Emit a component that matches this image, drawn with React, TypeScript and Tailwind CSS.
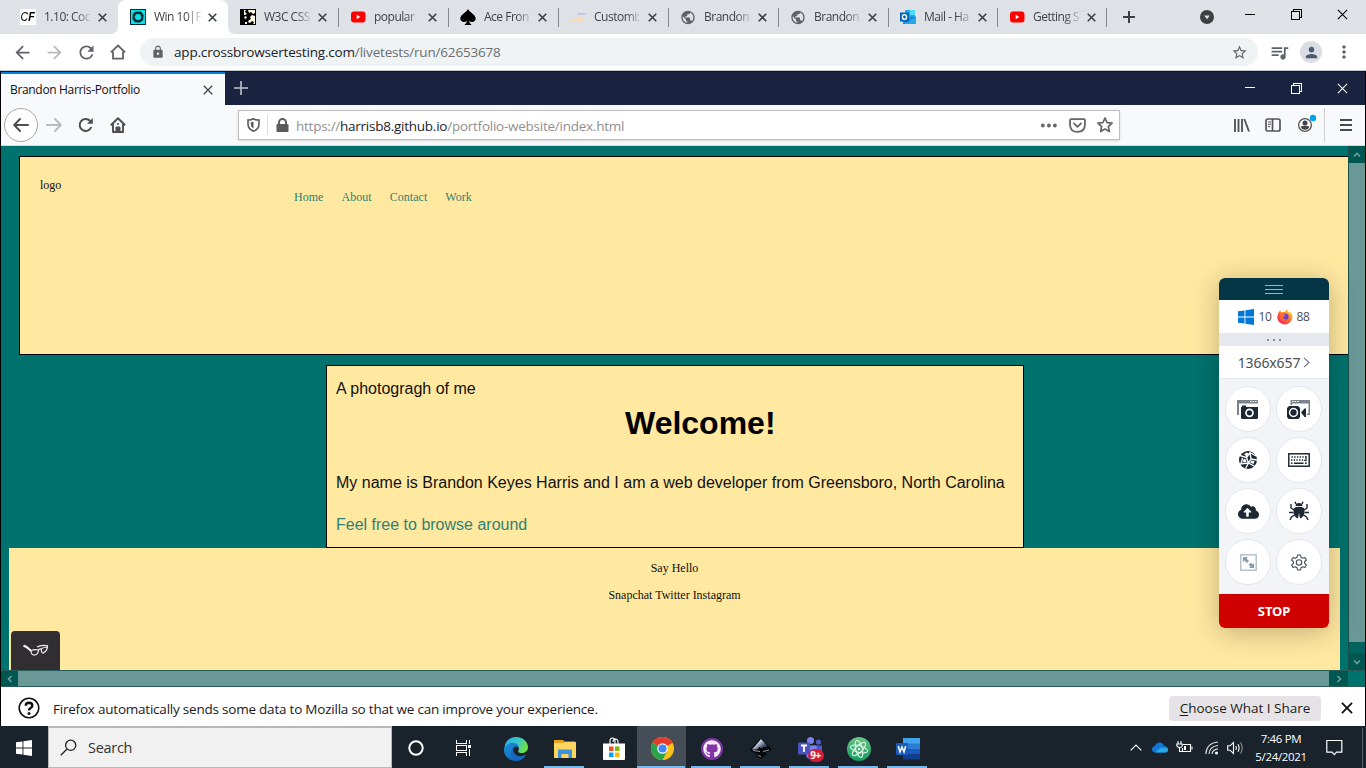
import React from "react";
import { MdArrowBack, MdArrowForward, MdRefresh, MdLock, MdStarBorder, MdQueueMusic, MdPerson, MdPublic, MdMoreVert } from "react-icons/md";
import { FaCloudUploadAlt, FaGithub } from "react-icons/fa";

const CloseX = ({ size = 9, w = 1.8, color = "#3c4043" }: { size?: number; w?: number; color?: string }) => (
  <svg width={size} height={size} viewBox="0 0 10 10" className="shrink-0">
    <path d="M.8 .8L9.2 9.2M9.2 .8L.8 9.2" stroke={color} strokeWidth={w} fill="none" />
  </svg>
);

const Restore = ({ color }: { color: string }) => (
  <svg width="11" height="11" viewBox="0 0 11 11" shapeRendering="crispEdges">
    <path d="M.5 2.5H8.5V10.5H.5ZM2.5 2.5V.5H10.5V8.5H8.5" stroke={color} fill="none" />
  </svg>
);

const YouTube = () => (
  <svg width="16" height="16" viewBox="0 0 16 16">
    <rect x="1" y="2.5" width="14.5" height="11" rx="3" fill="#f00" />
    <path d="M6.7 5.8V10.2L10.3 8Z" fill="#fff" />
  </svg>
);

const CfIcon = () => (
  <span className="flex h-4 w-4 items-center justify-center bg-white font-['Liberation_Sans_Narrow','Liberation_Sans',sans-serif] text-[13px] leading-4 text-black italic">
    <span className="flex origin-center scale-x-[0.82]">C<b>F</b></span>
  </span>
);

const CrossIcon = () => (
  <svg width="16" height="16" viewBox="0 0 16 16">
    <rect width="16" height="16" fill="#0b2a33" />
    <rect x="1" y="1" width="14" height="14" fill="#06e2ea" />
    <path d="M5 2.8L11 2.6L13.6 6L13.2 11L10 13.6L5 13.2L2.4 10L2.8 5Z" fill="#0b2a33" />
    <path d="M6 5.2L10.2 5L11.3 8.5L9.6 11L6 10.8L4.6 8Z" fill="#06e2ea" />
  </svg>
);

const PuzzleIcon = () => (
  <svg width="16" height="16" viewBox="0 0 16 16">
    <rect width="16" height="16" fill="#000" />
    <path d="M1 1H6L5 3L7 5L5 6H1ZM8 1H15V4L13 5L11 3L9 4ZM12 6L15 7V15H13L14 13L12 12L10 14L8 13L9 11L11 10L10 8Z" fill="#fff8e2" />
    <path d="M1 1H4V6H1Z" fill="#000" />
    <path d="M4 8L6 7L7 9L5 10ZM5 13H7V15H5Z" fill="#fff8e2" />
  </svg>
);

const Spade = () => (
  <svg width="16" height="16" viewBox="0 0 16 16">
    <path d="M8 0C9 3 15.7 5.5 15.7 9.6C15.7 13 11.5 14 9.3 12L9.8 14.5L11.2 15V16H4.8V15L6.2 14.5L6.7 12C4.5 14 .3 13 .3 9.6C.3 5.5 7 3 8 0Z" fill="#000" />
  </svg>
);

const CustomIcon = () => (
  <svg width="16" height="16" viewBox="0 0 16 16">
    <path d="M8 4H16V5.6H7Z" fill="#c5b3f2" />
    <path d="M0 11H3V10H5V11H8V8.8H13V10H12.5V12.2H0Z" fill="#fbd9ae" />
  </svg>
);

const Outlook = () => (
  <svg width="16" height="16" viewBox="0 0 16 16">
    <rect x="5" y="1" width="10" height="8" fill="#28a8ea" />
    <rect x="10" y="1" width="5" height="5" fill="#50d9ff" />
    <path d="M3 8L16 7.5V15H3Z" fill="#1490df" />
    <path d="M16 8L4 15H16Z" fill="#28a8ea" />
    <rect x="0" y="3.5" width="9" height="9" fill="#0364b8" />
    <ellipse cx="4.5" cy="8" rx="2.1" ry="2.4" fill="none" stroke="#fff" strokeWidth="1.4" />
  </svg>
);

const Globe = () => <MdPublic size={17} color="#5f6368" />;

const tabs = [
  { icon: <CfIcon />, title: "1.10: Coc" },
  { icon: <CrossIcon />, title: "Win 10|F", active: true },
  { icon: <PuzzleIcon />, title: "W3C CSS" },
  { icon: <YouTube />, title: "popular", sep: true },
  { icon: <Spade />, title: "Ace Fron", sep: true },
  { icon: <CustomIcon />, title: "Customi:", sep: true },
  { icon: <Globe />, title: "Brandon", sep: true },
  { icon: <Globe />, title: "Brandon", sep: true },
  { icon: <Outlook />, title: "Mail - Ha", sep: true },
  { icon: <YouTube />, title: "Getting S", sep: true },
];

function ChromeTabs() {
  return (
    <div className="flex h-[34px] shrink-0 bg-[#dee1e6] pl-2">
      {tabs.map((t, i) => (
        <div key={i} className={`relative flex h-[34px] shrink-0 items-center pl-3 ${i > 7 ? "w-[109px]" : "w-[110px]"} ${t.active ? "rounded-t-lg bg-white" : ""}`}>
          {t.sep && <i className="absolute top-2 left-0 h-[19px] w-px bg-[#85888d]" />}
          {t.active && (
            <svg width="126" height="8" viewBox="0 0 126 8" className="absolute bottom-0 -left-2">
              <path d="M0 8Q8 8 8 0V8ZM118 0Q118 8 126 8H118Z" fill="#fff" />
            </svg>
          )}
          <span className="flex h-4 w-4 shrink-0 items-center justify-center">{t.icon}</span>
          <span className="ml-2 w-[49px] [mask-image:linear-gradient(to_right,black_65%,transparent)] text-[12px] tracking-[-0.5px] whitespace-nowrap text-[#3f4246]">{t.title}</span>
          <span className="ml-[5px] flex"><CloseX /></span>
        </div>
      ))}
      <i className="mt-2 h-[19px] w-px shrink-0 bg-[#85888d]" />
      <svg width="12" height="12" viewBox="0 0 12 12" className="mt-[11px] ml-4 shrink-0"><path d="M6 0V12M0 6H12" stroke="#3c4043" strokeWidth="2" /></svg>
      <div className="ml-auto flex pr-[18px]">
        <svg width="14" height="14" viewBox="0 0 14 14" className="mt-[10px] mr-[-1px]"><circle cx="7" cy="7" r="7" fill="#3c4043" /><path d="M4.2 5.5H9.8L7 9.2Z" fill="#dee1e6" /></svg>
        <i className="mt-[14px] ml-8 h-px w-[10px] bg-black" />
        <span className="mt-[9px] ml-9"><Restore color="#000" /></span>
        <span className="mt-[9px] ml-[35px]"><CloseX size={11} w={1} color="#000" /></span>
      </div>
    </div>
  );
}

function ChromeBar() {
  return (
    <div className="flex h-[37px] shrink-0 items-center border-b border-[#c6cbd0] bg-white pl-3 text-[#5f6368]">
      <MdArrowBack size={21} />
      <MdArrowForward size={21} className="ml-[11px] text-[#b6b9bc]" />
      <MdRefresh size={21} className="ml-[11px]" />
      <svg width="16" height="16" viewBox="0 0 16 16" className="ml-[13px]" fill="none" stroke="#5f6368" strokeWidth="1.8"><path d="M.8 8.300L8 1.500L15.200 8.300M3 7.500V14.700H13V7.500" /></svg>
      <div className="ml-[14px] flex h-7 w-[1118px] items-center rounded-full bg-[#eff3f4] pl-[11px]">
        <MdLock size={14} />
        <span className="ml-[9px] text-[13.5px] tracking-[-0.18px] whitespace-nowrap text-[#6b6f73]"><span className="text-[#202124]">app.crossbrowsertesting.com</span>/livetests/run/62653678</span>
        <MdStarBorder size={17} className="mr-[10px] ml-auto" />
      </div>
      <MdQueueMusic size={21} className="ml-[11px]" />
      <span className="ml-[10px] flex h-[22px] w-[22px] items-center justify-center rounded-full bg-[#dadde3]"><MdPerson size={17} color="#4d5a72" /></span>
      <MdMoreVert size={20} className="ml-3" />
    </div>
  );
}

function FirefoxTabs() {
  return (
    <div className="flex h-[34px] shrink-0 border-t border-[#0c1420] bg-[#1a233f]">
      <div className="flex w-[224px] items-center border-t-2 border-[#0a7de0] bg-[#f8f9fb] pl-[9px]">
        <span className="w-[193px] text-[12px] tracking-[-0.33px] whitespace-nowrap text-[#111]">Brandon Harris-Portfolio</span>
        <CloseX size={10} w={1.3} color="#444" />
      </div>
      <svg width="14" height="14" viewBox="0 0 14 14" className="mt-[9px] ml-[9px]"><path d="M7 0V14M0 7H14" stroke="#c0c3ca" strokeWidth="1.6" /></svg>
      <div className="ml-auto flex pr-[17px]">
        <i className="mt-[15px] h-px w-[10px] bg-white" />
        <span className="mt-[11px] ml-9"><Restore color="#fff" /></span>
        <span className="mt-[11px] ml-[35px]"><CloseX size={11} w={1} color="#fff" /></span>
      </div>
    </div>
  );
}

function FirefoxBar() {
  return (
    <div className="flex h-[41px] shrink-0 items-center border-b border-[#d3e0e2] bg-[#f8f9fb] text-[#4e4e50]">
      <span className="ml-[3px] flex h-[34px] w-[34px] items-center justify-center rounded-full border border-[#a9a9ab] bg-white">
        <svg width="16" height="14" viewBox="0 0 16 14" fill="none" stroke="#4e4e50" strokeWidth="1.9" strokeLinecap="round" strokeLinejoin="round"><path d="M15 7H1.5M7 1L1.2 7L7 13" /></svg>
      </span>
      <svg width="16" height="14" viewBox="0 0 16 14" fill="none" stroke="#b9babc" strokeWidth="1.9" strokeLinecap="round" strokeLinejoin="round" className="ml-2"><path d="M1 7H14.5M9 1L14.8 7L9 13" /></svg>
      <svg width="16" height="16" viewBox="0 0 16 16" fill="none" stroke="#4e4e50" strokeWidth="2" className="ml-4"><path d="M13.3 10A6 6 0 1 1 12 3.8L14 5.5" /><path d="M14.8 1V6.8H9Z" fill="#4e4e50" stroke="none" /></svg>
      <svg width="16" height="16" viewBox="0 0 16 16" fill="none" stroke="#4e4e50" strokeWidth="1.9" strokeLinejoin="round" className="ml-4"><path d="M.8 8.2L8 1.2L15.2 8.2M3 7V15H13V7" /><path d="M6 15V10H10V15Z" fill="#4e4e50" strokeWidth="1" /><circle cx="8" cy="7" r="1" fill="#4e4e50" stroke="none" /></svg>
      <div className="ml-[112px] flex h-[30px] w-[882px] items-center border border-[#bfbcc1] bg-white pl-2 shadow-sm">
        <svg width="13" height="14" viewBox="0 0 13 14"><path d="M1 2Q4 2.3 6.5 .8Q9 2.3 12 2V6Q12 11 6.5 13.2Q1 11 1 6Z" fill="none" stroke="#5a5a5c" strokeWidth="1.6" /><path d="M6.5 3.5V10.5Q3.8 9 3.7 6V4.3Q5.4 4.2 6.5 3.5Z" fill="#5a5a5c" /></svg>
        <i className="ml-[7px] h-5 w-px bg-[#dddddf]" />
        <svg width="13" height="15" viewBox="0 0 12 15" className="ml-2"><rect y="6" width="12" height="8" rx="1.2" fill="#5a5a5c" /><path d="M2.5 7V4.3A3.5 3.3 0 0 1 9.5 4.3V7" fill="none" stroke="#5a5a5c" strokeWidth="1.9" /></svg>
        <span className="mt-[2px] ml-[7px] text-[13.5px] tracking-[-0.25px] whitespace-nowrap text-[#8f8f92]">https://<span className="text-[#1c1c1f]">harrisb8.github.io</span>/portfolio-website/index.html</span>
        <svg width="17" height="5" viewBox="0 0 17 5" className="ml-auto"><g fill="#666"><circle cx="2.8" cy="2.500" r="1.900" /><circle cx="8.900" cy="2.500" r="1.900" /><circle cx="14.900" cy="2.500" r="1.900" /></g></svg>
        <svg width="17" height="15" viewBox="0 0 16 14" fill="none" stroke="#666" strokeWidth="1.7" strokeLinecap="round" strokeLinejoin="round" className="ml-3"><path d="M1 2Q1 1 2 1H14Q15 1 15 2V6Q15 13 8 13Q1 13 1 6ZM4.7 5L8 8.2L11.3 5" /></svg>
        <svg width="16" height="16" viewBox="0 0 16 16" fill="none" stroke="#666" strokeWidth="1.7" strokeLinejoin="round" className="mr-[6px] ml-[11px]"><path d="M8 1L10.1 5.6L15.1 6.1L11.4 9.5L12.4 14.6L8 12L3.6 14.6L4.6 9.5L.9 6.1L5.9 5.6Z" /></svg>
      </div>
      <svg width="16" height="14" viewBox="0 0 16 14" fill="none" stroke="#555" strokeWidth="1.9" className="ml-[114px]"><path d="M1 1V14M4.500 1V14M8 1V14M10.300 1L15 13.500" /></svg>
      <svg width="16" height="14" viewBox="0 0 16 14" fill="none" stroke="#555" strokeWidth="1.7" className="ml-[15px]"><rect x="1" y="1" width="14" height="12" rx="1.8" /><path d="M7.5 1V13" /><path d="M3 4H6M3 6.3H6M3 8.6H5" strokeWidth="1" /></svg>
      <svg width="20" height="20" viewBox="0 0 20 20" className="mt-[-2px] ml-4"><circle cx="8" cy="11" r="6.4" fill="none" stroke="#555" strokeWidth="1.3" /><circle cx="8" cy="9" r="2.5" fill="#444" /><path d="M3.6 12.5Q8 11 12.4 12.5Q11 15.7 8 15.7Q5 15.7 3.6 12.5Z" fill="#444" /><circle cx="16" cy="4" r="3.2" fill="#00a3ee" /></svg>
      <i className="ml-[7px] h-[34px] w-px bg-[#cfcfd1]" />
      <svg width="12" height="12" viewBox="0 0 12 12" className="ml-[15px]"><path d="M0 1H12M0 6H12M0 11H12" stroke="#4a4a4c" strokeWidth="1.8" /></svg>
    </div>
  );
}

const Chevron = ({ d }: { d: string }) => (
  <svg width="8" height="8" viewBox="0 0 8 8"><path d={d} stroke="#6ba09d" strokeWidth="1.7" fill="none" /></svg>
);

function Viewport() {
  return (
    <div className="flex h-[541px] shrink-0 flex-col bg-[#00726d]">
      <div className="flex h-[524px]">
        <div className="flex w-[1347px] flex-col overflow-hidden font-['Liberation_Serif','Times_New_Roman',serif] text-[12px] text-[#111]">
          <header className="mt-[10px] ml-[18px] flex h-[199px] w-[1340px] shrink-0 border border-black bg-[#ffe8a0]">
            <span className="mt-5 ml-5 w-[254px] leading-4">logo</span>
            <nav className="mt-8 flex gap-[18px] leading-4 tracking-[0.04px] text-[#2f8273]">
              <span>Home</span><span>About</span><span>Contact</span><span>Work</span>
            </nav>
          </header>
          <main className="mt-[10px] ml-[325px] flex h-[183px] w-[698px] shrink-0 flex-col border border-black bg-[#ffe8a0] pl-[9px] font-['Liberation_Sans',Arial,sans-serif] text-[16px] leading-5 whitespace-nowrap">
            <p className="mt-[13px]">A photogragh of me</p>
            <h1 className="mt-[6px] ml-[289px] text-[32px] leading-9 font-bold text-black">Welcome!</h1>
            <p className="mt-[32px]">My name is Brandon Keyes Harris and I am a web developer from Greensboro, North Carolina</p>
            <p className="mt-[22px] text-[#2f8273]">Feel free to browse around</p>
          </main>
          <footer className="ml-2 flex h-[122px] w-[1331px] shrink-0 flex-col items-center bg-[#ffe8a0] pt-3 leading-4">
            <p>Say Hello</p>
            <p className="mt-[11px]">Snapchat Twitter Instagram</p>
          </footer>
        </div>
        <div className="flex w-[17px] flex-col border-l border-[#17504c]">
          <span className="flex h-[17px] items-center justify-center bg-[#005650]"><Chevron d="M1 5.5L4 2.5L7 5.5" /></span>
          <span className="h-[479px] bg-[#6a9896]" />
          <span className="h-[11px] bg-[#00635d]" />
          <span className="flex h-[17px] items-center justify-center bg-[#005650]"><Chevron d="M1 2.5L4 5.5L7 2.5" /></span>
        </div>
      </div>
      <div className="flex h-[17px] border-y border-[#285d5a]">
        <span className="flex w-[17px] items-center justify-center bg-[#005650]"><Chevron d="M5.5 1L2.5 4L5.5 7" /></span>
        <span className="w-[1311px] bg-[#6a9896]" />
        <span className="flex w-[19px] items-center justify-center bg-[#005650]"><Chevron d="M2.5 1L5.5 4L2.5 7" /></span>
      </div>
    </div>
  );
}

function Notice() {
  return (
    <div className="flex h-[39px] shrink-0 items-center bg-white pl-[17px]">
      <svg width="22" height="22" viewBox="0 0 22 22" fill="none" stroke="#111" className="mt-[3px]"><circle cx="11" cy="11" r="9.8" strokeWidth="1.6" /><path d="M7.7 8.7Q7.8 5.7 11 5.7Q14.3 5.8 14.3 8.6Q14.3 10 12.6 11Q11 11.9 11 13.5" strokeWidth="2.4" /><circle cx="11" cy="16.5" r="1.5" fill="#111" stroke="none" /></svg>
      <span className="mt-[5px] ml-[13px] text-[13.5px] tracking-[-0.22px] whitespace-nowrap text-[#1a1a1c]">Firefox automatically sends some data to Mozilla so that we can improve your experience.</span>
      <span className="mt-[3px] ml-auto flex h-[25px] w-[152px] items-center justify-center rounded-sm bg-[#e5e3e5] text-[13.5px] whitespace-nowrap text-[#1a1a1c]"><u className="underline-offset-2">C</u>hoose What I Share</span>
      <span className="mt-[3px] mr-3 ml-5"><CloseX size={12} w={1.5} color="#111" /></span>
    </div>
  );
}

const WinLogo = ({ size, color }: { size: number; color: string }) => (
  <svg width={size} height={size} viewBox="0 0 16 16"><path d="M0 2.3L6.5 1.4V7.5H0ZM7.4 1.2L16 0V7.5H7.4ZM0 8.5H6.5V14.6L0 13.7ZM7.4 8.5H16V16L7.4 14.8Z" fill={color} /></svg>
);

const Edge = () => (
  <svg width="24" height="24" viewBox="0 0 24 24">
    <defs>
      <linearGradient id="eg" x1="0" y1="0" x2="1" y2=".4"><stop offset="0" stopColor="#2aa9e8" /><stop offset=".55" stopColor="#36c7d0" /><stop offset="1" stopColor="#6be04d" /></linearGradient>
      <linearGradient id="eb" x1="0" y1="0" x2="1" y2="1"><stop offset="0" stopColor="#1b92dc" /><stop offset="1" stopColor="#0f56a8" /></linearGradient>
    </defs>
    <path d="M.5 10.5C1 4 6 0 12 0C19 0 24 5 24 10C24 14 21 16 17.5 16C14.5 16 13.5 14.8 14.5 13.5C16 11 14 8 10 8C6 8 1 11 .5 14Z" fill="url(#eg)" />
    <path d="M0 13C.5 8 5 5.7 9 5.8C13 6 15.8 9 15 12C14.5 10 12.5 9 10.5 10C7.5 12 9 19 15 19.5C18 19.7 21 18.2 22 17.5C20 21.5 16 24 12 24C5 24 0 19 0 13Z" fill="url(#eb)" />
    <path d="M9.5 10.5C6 13.5 6.5 20.5 12 23.8C16 24 20 21.5 22 17.5C18 19.8 12.5 20 10.3 16C9 13.8 9 12 9.5 10.5Z" fill="#1368be" />
  </svg>
);

const Explorer = () => (
  <svg width="22" height="20" viewBox="0 0 22 20">
    <path d="M0 1H9L10.5 2.5H21V5H0Z" fill="#e8a520" />
    <path d="M0 4H10L11 3H22V19H0Z" fill="#ffd562" />
    <path d="M4 19V11.5Q4 10.5 5 10.5H17Q18 10.5 18 11.5V19H14.5V15H7.5V19Z" fill="#3b93dc" />
  </svg>
);

const Store = () => (
  <svg width="24" height="24" viewBox="0 0 24 24">
    <path d="M8 7V4Q8 1 10.5 1Q13 1 13 4V7M11 5Q11.3 2 13.3 2Q16 2 16 5V7" stroke="#fff" fill="none" strokeWidth="1.1" />
    <path d="M1 6.5H23V22Q23 23 22 23H2Q1 23 1 22Z" fill="#fff" />
    <path d="M7 9.5H11.5V14H7Z" fill="#f25022" /><path d="M13 9.5H17.5V14H13Z" fill="#7fba00" /><path d="M7 15.5H11.5V20H7Z" fill="#00a4ef" /><path d="M13 15.5H17.5V20H13Z" fill="#ffb900" />
  </svg>
);

const Chrome = () => (
  <svg width="23" height="23" viewBox="0 0 24 24">
    <circle cx="12" cy="12" r="12" fill="#fbc116" />
    <path d="M12 12L1.6 6A12 12 0 0 1 22.4 6Z" fill="#e33b2e" /><path d="M12 6.5H22.6L22 5.3L12 2Z" fill="#e33b2e" />
    <path d="M1.6 6A12 12 0 0 0 12 24L16.8 14.8L12 12Z" fill="#2ba24c" />
    <circle cx="12" cy="12" r="5.5" fill="#fff" /><circle cx="12" cy="12" r="4.3" fill="#4285f4" />
  </svg>
);

const Inkscape = () => (
  <svg width="22" height="22" viewBox="0 0 22 22">
    <defs><linearGradient id="ink" x1="0" y1="0" x2="1" y2=".8"><stop offset=".3" stopColor="#fff" /><stop offset=".6" stopColor="#7b8fa8" /><stop offset=".95" stopColor="#10141a" /></linearGradient></defs>
    <path d="M11 .5Q12 .5 13 2L21 10.5Q22 12 20 13L15 14.5L17 16L15 18L13 19L11 21L8 19.5L6 17.5L8 16L4 14.5L1 13Q0 12 1 10.5L9 2Q10 .5 11 .5Z" fill="#050608" />
    <path d="M11 1L18 8.5L16 10L13.500 8.500L12 10.500L9.500 9L7 11.500H2L9 3.500Z" fill="url(#ink)" />
    <path d="M3 12.500L10 13.500M13 13.500L19 12M8 17.5L11 18.5" stroke="#b4c0cd" strokeWidth=".8" />
  </svg>
);

const Teams = () => (
  <span className="relative flex h-6 w-6">
    <svg width="24" height="24" viewBox="0 0 24 24">
      <circle cx="12.5" cy="3.5" r="3.5" fill="#7b83eb" /><circle cx="20.5" cy="5" r="2.6" fill="#5059c9" />
      <path d="M14 8.5H24V15Q23 19 19 19H14Z" fill="#5059c9" /><path d="M8 8.5H18.5V18Q17 22 13 22Q8 22 8 17Z" fill="#7b83eb" />
      <rect x="0" y="5.5" width="12" height="12" rx="1" fill="#4b53bc" /><path d="M3 8.5H9M6 8.5V15" stroke="#fff" strokeWidth="1.8" />
    </svg>
    <b className="absolute top-[12px] left-[10px] flex h-[13px] w-[16px] items-center justify-center rounded-full bg-[#d21d38] text-[10px] leading-none tracking-[-0.5px] text-white">9+</b>
  </span>
);

const Atom = () => (
  <svg width="24" height="24" viewBox="0 0 24 24">
    <defs><linearGradient id="atom" x1="0" y1="0" x2="0" y2="1"><stop stopColor="#67c784" /><stop offset="1" stopColor="#159a62" /></linearGradient></defs>
    <circle cx="12" cy="12" r="12" fill="url(#atom)" />
    <g fill="none" stroke="#effbf3" strokeWidth="1">
      <ellipse cx="12" cy="12" rx="8.8" ry="3.3" transform="rotate(15 12 12)" />
      <ellipse cx="12" cy="12" rx="8.8" ry="3.3" transform="rotate(75 12 12)" />
      <ellipse cx="12" cy="12" rx="8.8" ry="3.3" transform="rotate(-45 12 12)" />
    </g>
    <circle cx="12" cy="12" r="1.2" fill="#fff" />
  </svg>
);

const Word = () => (
  <svg width="24" height="22" viewBox="0 0 24 22">
    <path d="M7 0H24V6H7Z" fill="#41a5ee" /><path d="M7 5.5H24V11H7Z" fill="#2b7cd3" /><path d="M7 11H24V16.5H7Z" fill="#185abd" /><path d="M7 16.5H24V21.5H7Z" fill="#103f91" />
    <rect x="0" y="5" width="12" height="12" rx="1" fill="#185abd" /><path d="M2.3 8L4 14L6 9L8 14L9.7 8" stroke="#fff" strokeWidth="1.5" fill="none" />
  </svg>
);

const apps = [
  { icon: <Edge /> },
  { icon: <Explorer />, bar: true },
  { icon: <Store /> },
  { icon: <Chrome />, bar: true, hot: true },
  { icon: <span className="flex h-[22px] w-[22px] items-center justify-center rounded-full bg-[#8235a6]"><FaGithub size={18} color="#f3ebf6" /></span>, bar: true },
  { icon: <Inkscape />, bar: true },
  { icon: <Teams />, bar: true },
  { icon: <Atom />, bar: true },
  { icon: <Word />, bar: true },
];

function Taskbar() {
  return (
    <div className="flex h-[42px] shrink-0 bg-[#1a222c]">
      <span className="flex w-12 items-center justify-center pt-px"><WinLogo size={16} color="#fff" /></span>
      <div className="flex h-[42px] w-[344px] items-center border border-t-2 border-[#b8b8b8] bg-[#f1f1f1] pl-[11px]">
        <svg width="17" height="17" viewBox="0 0 17 17" fill="none" stroke="#222" strokeWidth="1.3"><circle cx="10.7" cy="6.3" r="5.1" /><path d="M7 10L.8 16.2" /></svg>
        <span className="mt-px ml-[11px] text-[14.5px] tracking-[-0.3px] text-[#333]">Search</span>
      </div>
      <span className="flex w-12 items-center justify-center pt-px"><svg width="16" height="16" viewBox="0 0 16 16"><circle cx="8" cy="8" r="6.7" stroke="#fff" strokeWidth="2" fill="none" /></svg></span>
      <span className="flex w-[46px] items-center justify-center pt-px"><svg width="17" height="16" viewBox="0 0 17 16" fill="none" stroke="#fff" shapeRendering="crispEdges"><path d="M1.5 0V3.5H11.5V0M1.5 16V12.5H11.5V16M1.5 5.5H11.5V10.5H1.5ZM14.5 0V4M14.5 9V16" /><path d="M13 5H16V8H13Z" fill="#fff" stroke="none" /></svg></span>
      <div className="ml-1 flex">
        {apps.map((a, i) => (
          <span key={i} className={`relative flex w-[49px] items-center justify-center pt-[3px] ${a.hot ? "bg-[#454d56]" : ""}`}>
            <span className="relative left-px flex">{a.icon}</span>
            {a.bar && <i className={`absolute bottom-0 h-[2px] bg-[#76b9ed] ${a.hot ? "left-0 w-[48px]" : "left-[5px] w-10"}`} />}
          </span>
        ))}
      </div>
      <div className="ml-auto flex items-center pt-px text-white">
        <svg width="12" height="7" viewBox="0 0 12 7"><path d="M.7 6.3L6 1L11.3 6.3" stroke="#fff" strokeWidth="1.2" fill="none" /></svg>
        <svg width="16" height="11" viewBox="0 0 16 11" className="ml-[10px]"><path d="M3.5 10.5Q0 10.5 0 7.5Q0 4.5 3 4Q4 .5 7.5 .5Q11 .5 12 4Q16 4 16 7.5Q16 10.5 13 10.5Z" fill="#0f78d4" /><path d="M3 10.5L9 5.5L15.5 6Q17 10.5 13 10.5Z" fill="#28a8ea" /></svg>
        <svg width="17" height="13" viewBox="0 0 17 13" className="ml-2" fill="none" stroke="#fff" strokeWidth="1.1"><path d="M2 0V3M5 0V3M.8 3H6.2V5Q6 6.5 3.5 6.5Q.8 6 .8 4ZM3.5 6.5V10.5H6" /><path d="M7 3.5H14.5V10.5H6.5V7M16 5.5V8.5" /><path d="M8 5H10V9H8Z" fill="#fff" stroke="none" /></svg>
        <svg width="14" height="14" viewBox="0 0 14 14" className="ml-3" fill="none" stroke="#ddd" strokeWidth="1.2"><path d="M.8 13Q1.5 2 13 1M4 13Q4.5 5.5 13 4.5M7 13Q7.5 8.5 13 7.8" /><circle cx="11.5" cy="12" r="1.5" fill="#fff" stroke="none" /></svg>
        <svg width="17" height="14" viewBox="0 0 17 14" className="ml-[8px]" fill="none" stroke="#fff" strokeWidth="1.1"><path d="M.7 4.8H3L6.5 1.5V12.5L3 9.2H.7ZM8.8 5Q10 7 8.8 9M11 3.3Q13.2 7 11 10.7" /><path d="M13.5 1.5Q17 7 13.5 12.5" stroke="#89919a" /></svg>
        <div className="ml-[8px] flex w-[58px] flex-col items-center text-[11.5px] leading-[18px] tracking-[-0.35px] whitespace-nowrap"><span>7:46 PM</span><span>5/24/2021</span></div>
        <svg width="17" height="17" viewBox="0 0 17 17" className="ml-[16px]" fill="none" stroke="#fff" strokeWidth="1.2"><path d="M.8 1.5H15.8V13.2H10.5L8.3 15.7L6 13.2H.8Z" /></svg>
        <i className="ml-[19px] h-10 w-px bg-[#59616a]" />
        <i className="w-[3px]" />
      </div>
    </div>
  );
}

const tools = [
  <svg width="22" height="20" viewBox="0 0 22 20"><path d="M0 1H21V4.500H2V16H0Z" fill="#7c828a" /><path d="M13 2.500H14.5M15.5 2.500H17M18 2.500H19.5" stroke="#fff" strokeWidth="1.2" /><path d="M4 8H5V6.500H9V8H21V18.500Q21 20 19.500 20H5.500Q4 20 4 18.500Z" fill="#1c2834" /><circle cx="12.5" cy="13.800" r="3.5" fill="none" stroke="#fff" strokeWidth="1.7" /></svg>,
  <svg width="24" height="20" viewBox="0 0 24 20"><path d="M3.500 6V1H23V16H20V14.500H21.500V4.500H5V6Z" fill="#7c828a" /><path d="M5 2.500H6.5M7.500 2.500H9M10 2.500H11.500" stroke="#fff" strokeWidth="1.2" /><path d="M0 9L2 7H11L13 9V18L11.500 20H1.500L0 18Z" fill="#1c2834" /><path d="M14 13.500L17.500 9.500H19V18H17.500Z" fill="#1c2834" /><circle cx="6.5" cy="13.500" r="3.9" fill="none" stroke="#fff" strokeWidth="1.5" /></svg>,
  <svg width="18" height="18" viewBox="0 0 18 18"><circle cx="9" cy="9" r="9" fill="#1c2834" /><path d="M1 4.500L7.500 6.500L9.500 12L6.500 17.500M7.500 6.500L11 1.500M11 1.500L17 5M0 13L9.500 12L12 8L18 9M12 8L11 1.500M9.500 12L16 15.500M3.500 7L2 13" stroke="#fff" strokeWidth="1.4" fill="none" /><path d="M5 3L8 1.500L9.500 3L7.500 5.500ZM12.500 9.500L15.500 10L14.500 13L11 11.500ZM4.500 8L6.500 8L7.500 11L4 11Z" fill="#fff" /></svg>,
  <svg width="22" height="14" viewBox="0 0 22 14"><rect x=".8" y=".8" width="20.4" height="12.4" fill="none" stroke="#1c2834" strokeWidth="1.5" /><path d="M3.500 4H19M3 7H17" stroke="#1c2834" strokeWidth="1.500" strokeDasharray="1.4 1.3" /><path d="M18 3.300V7.700H16.500" stroke="#1c2834" strokeWidth="1.200" fill="none" /><path d="M3 10.300H4.500M6 10.300H15.500M17 10.300H18.700" stroke="#1c2834" strokeWidth="1.500" /></svg>,
  <FaCloudUploadAlt size={21} color="#1c2834" />,
  <svg width="20" height="20" viewBox="0 0 20 20"><path d="M7 3Q10 1 13 3L13.5 5H6.5ZM5 7Q10 4.5 15 7Q17 15 11 17.5L10 12L9 17.5Q3 15 5 7Z" fill="#1c2834" /><path d="M7 3L6 .7M13 3L14 .7M5 9L2 7V3M4.500 11.500H0M5.500 14L2.500 16L1 19M15 9L18 7V3M15.500 11.500H20M14.500 14L17.500 16L19 19" stroke="#1c2834" strokeWidth="1.4" fill="none" /></svg>,
  <svg width="17" height="17" viewBox="0 0 17 17"><rect x=".8" y=".8" width="15.4" height="15.4" fill="none" stroke="#b5c2cf" strokeWidth="1.5" /><path d="M3 3H8L6.500 4.500L9 7L7 9L4.500 6.500L3 8ZM14 14H9L10.500 12.500L8.700 10.700L10.700 8.700L12.500 10.500L14 9Z" fill="#8799ad" /></svg>,
  <svg width="16" height="17" viewBox="0 0 16 17" fill="none" stroke="#444c56" strokeWidth="1.1" strokeLinejoin="round"><path d="M6 3.3L6.5 1H9.5L10 3.3L11.6 4.2L13.9 3.4L15.4 6L13.6 7.7V9.3L15.4 11L13.9 13.6L11.6 12.8L10 13.7L9.5 16H6.5L6 13.7L4.4 12.8L2.1 13.6L.6 11L2.4 9.3V7.7L.6 6L2.1 3.4L4.4 4.2Z" /><circle cx="8" cy="8.5" r="2.7" /></svg>,
];

const FirefoxLogo = () => (
  <svg width="16" height="16" viewBox="0 0 16 16">
    <defs><linearGradient id="fx" x1="1" y1="0" x2=".2" y2="1"><stop offset=".1" stopColor="#ffdf3c" /><stop offset=".5" stopColor="#ff7a2a" /><stop offset="1" stopColor="#f0195f" /></linearGradient></defs>
    <path d="M3 1.5L4.5 3.5Q6 2.5 8 3L9.5 0Q11 3 13 4L13.5 2.8Q17 8 14 12.5Q10.5 16.5 5.5 15Q0 13 .3 7.5Q.5 4 3 1.5Z" fill="url(#fx)" />
    <circle cx="8.300" cy="7.800" r="3.300" fill="#6b41c8" /><path d="M3 5.5Q5 4.5 8.5 6Q8 8 5.7 8Q6.5 10.5 9.5 10.5Q6 13 3.5 10Z" fill="#ff6a39" />
  </svg>
);

function Panel() {
  return (
    <div className="absolute top-[278px] left-[1219px] flex h-[350px] w-[110px] flex-col overflow-hidden rounded-md bg-[#f3f4f7] shadow-[0_4px_28px_rgba(0,0,0,0.25)]">
      <div className="flex h-[22px] items-center justify-center bg-[#053646]"><svg width="18" height="9" viewBox="0 0 18 9" shapeRendering="crispEdges"><path d="M0 .5H18M0 4.500H18M0 8.500H18" stroke="#9db3bc" /></svg></div>
      <div className="flex h-[33px] items-center justify-center bg-white text-[12px] text-[#4b4f55]"><WinLogo size={16} color="#0078d7" /><span className="mt-px mr-[5px] ml-1 tracking-[-0.3px]">10</span><FirefoxLogo /><span className="mt-px ml-1 tracking-[-0.3px]">88</span></div>
      <div className="flex h-[13px] items-center justify-center gap-1 bg-[#e5e8ed]"><i className="h-0.5 w-0.5 bg-[#8292a6]" /><i className="h-0.5 w-0.5 bg-[#8292a6]" /><i className="h-0.5 w-0.5 bg-[#8292a6]" /></div>
      <div className="flex h-[33px] items-center justify-center border-b border-[#e3e6ea] bg-white font-['Noto_Sans',sans-serif] text-[14px] text-[#4b4f55]"><span className="tracking-[-0.1px]">1366x657</span><svg width="7" height="11" viewBox="0 0 7 11" className="ml-[3px]"><path d="M1 .8L6 5.5L1 10.2" stroke="#70757c" strokeWidth="1.1" fill="none" /></svg></div>
      <div className="grid h-[215px] grid-cols-[46px_46px] content-start gap-[5px] px-[6px] pt-[7px]">
        {tools.map((t, i) => (
          <span key={i} className="flex h-[46px] w-[46px] items-center justify-center rounded-full border border-[#e2e6eb] bg-white">{t}</span>
        ))}
      </div>
      <div className="flex h-[34px] items-center justify-center bg-[#d00000] pt-px font-['Noto_Sans',sans-serif] text-[13px] font-bold tracking-[-0.1px] text-white">STOP</div>
    </div>
  );
}

export default function App() {
  return (
    <div className="relative flex h-[768px] w-[1366px] flex-col overflow-hidden bg-black font-['Open_Sans','Noto_Sans',sans-serif]">
      <ChromeTabs />
      <ChromeBar />
      <div className="flex h-[655px] shrink-0 flex-col px-px">
        <FirefoxTabs />
        <FirefoxBar />
        <Viewport />
        <Notice />
      </div>
      <Taskbar />
      <div className="absolute top-[631px] left-[11px] flex h-[39px] w-[49px] items-center justify-center rounded-t bg-[#302e30]">
        <svg width="26" height="13" viewBox="0 0 26 13" fill="none" stroke="#eee" strokeWidth="1.2"><path d="M.8 2L8 6.5M8 6.5Q8 11.5 12 11Q15.5 10 15.5 6Q12 5 8 6.5ZM15.5 6Q17 4.5 18.5 5M18.5 4.5Q18 9.5 20.5 9Q24 7 24.5 3Q22 3 18.5 4.5M14 3Q18 .5 25 1.8" /><path d="M.5 1.5L4 3L8 7" strokeWidth="2" /></svg>
      </div>
      <Panel />
    </div>
  );
}
